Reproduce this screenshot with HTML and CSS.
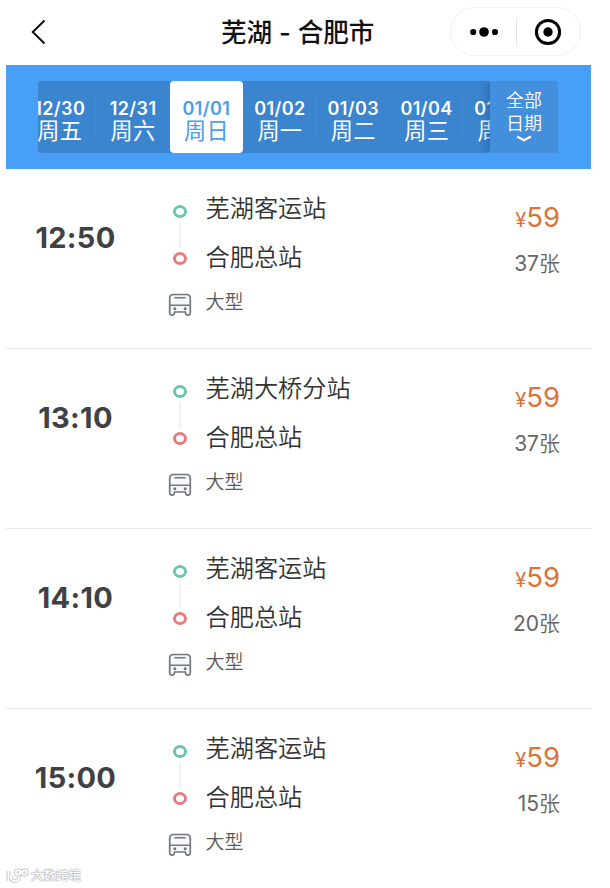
FILE: index.html
```html
<!DOCTYPE html>
<html lang="zh-CN">
<head>
  <meta charset="UTF-8" />
  <meta name="viewport" content="width=device-width, initial-scale=1" />
  <title>芜湖 - 合肥市</title>
  <link rel="stylesheet" href="styles.css">
</head>
<body>

<svg class="sprite" width="0" height="0">
  <symbol id="bus" viewBox="0 0 24 24">
    <path d="M5.500 1.500h13q3.800 0 3.800 3.800v14.200q0 2.700-2.400 2.700-2.300 0-2.600-3.200H6.700q-.3 3.200-2.600 3.200-2.400 0-2.400-2.700V5.300q0-3.800 3.800-3.800z" fill="#f3f6fb" stroke="#74787d" stroke-width="1.700" />
    <path d="M2 12.200h20M7 4.800h10" fill="none" stroke="#74787d" stroke-width="1.500" stroke-linecap="round" />
    <circle cx="6.800" cy="15.800" r="1.500" fill="#74787d" />
    <circle cx="17.200" cy="15.800" r="1.500" fill="#74787d" />
  </symbol>
</svg>

<header class="navbar">
  <svg class="back" width="15" height="26" viewBox="0 0 15 26">
    <path d="M13.500 1.500L1.800 13l11.700 11.500" fill="none" stroke="#111" stroke-width="2" />
  </svg>
  <h1>芜湖 - 合肥市</h1>
  <div class="capsule">
    <svg width="30" height="12" viewBox="0 0 30 12">
      <circle cx="4.200" cy="6" r="3.100" />
      <circle cx="15" cy="6" r="4.800" />
      <circle cx="26" cy="6" r="3.100" />
    </svg>
    <span class="capsule-line"></span>
    <svg width="28" height="28" viewBox="0 0 28 28">
      <circle cx="14" cy="14" r="11.600" fill="none" stroke="#000" stroke-width="3" />
      <circle cx="14" cy="14" r="4.700" />
    </svg>
  </div>
</header>

<div class="dates">
  <div class="date-list">
    <div class="date"><b>12/30</b><span>周五</span></div>
    <div class="date"><b>12/31</b><span>周六</span></div>
    <div class="date active"><b>01/01</b><span>周日</span></div>
    <div class="date"><b>01/02</b><span>周一</span></div>
    <div class="date"><b>01/03</b><span>周二</span></div>
    <div class="date"><b>01/04</b><span>周三</span></div>
    <div class="date"><b>01/05</b><span>周四</span></div>
  </div>
  <div class="all-dates">
    <span>全部</span>
    <span>日期</span>
    <svg width="16" height="7" viewBox="0 0 16 7">
      <path d="M1 1.500l7 3.800 7-3.800" fill="none" stroke="#fff" stroke-width="2.200" />
    </svg>
  </div>
</div>

<main class="trips">
  <div class="trip">
    <div class="time">12:50</div>
    <div class="route">
      <div class="track"><i class="dot from"></i><i class="line"></i><i class="dot to"></i><svg class="bus"><use href="#bus" /></svg></div>
      <div class="stops"><p>芜湖客运站</p><p>合肥总站</p><p class="type">大型</p></div>
    </div>
    <div class="fare"><div class="price"><small>¥</small>59</div><div class="left">37<span>张</span></div></div>
  </div>

  <div class="trip">
    <div class="time">13:10</div>
    <div class="route">
      <div class="track"><i class="dot from"></i><i class="line"></i><i class="dot to"></i><svg class="bus"><use href="#bus" /></svg></div>
      <div class="stops"><p>芜湖大桥分站</p><p>合肥总站</p><p class="type">大型</p></div>
    </div>
    <div class="fare"><div class="price"><small>¥</small>59</div><div class="left">37<span>张</span></div></div>
  </div>

  <div class="trip">
    <div class="time">14:10</div>
    <div class="route">
      <div class="track"><i class="dot from"></i><i class="line"></i><i class="dot to"></i><svg class="bus"><use href="#bus" /></svg></div>
      <div class="stops"><p>芜湖客运站</p><p>合肥总站</p><p class="type">大型</p></div>
    </div>
    <div class="fare"><div class="price"><small>¥</small>59</div><div class="left">20<span>张</span></div></div>
  </div>

  <div class="trip">
    <div class="time">15:00</div>
    <div class="route">
      <div class="track"><i class="dot from"></i><i class="line"></i><i class="dot to"></i><svg class="bus"><use href="#bus" /></svg></div>
      <div class="stops"><p>芜湖客运站</p><p>合肥总站</p><p class="type">大型</p></div>
    </div>
    <div class="fare"><div class="price"><small>¥</small>59</div><div class="left">15<span>张</span></div></div>
  </div>
</main>

<div class="watermark">
  <svg width="23" height="16" viewBox="0 0 23 16">
    <g fill="none" stroke="#bdbdbd" stroke-width="3.600">
      <path d="M2.500 3v10M5 8.500q0 4.500 4 4.500t4-4.500" />
      <circle cx="12" cy="4.500" r="2.300" />
      <circle cx="18.500" cy="4.500" r="2.300" />
    </g>
    <g fill="none" stroke="#fff" stroke-width="2">
      <path d="M2.500 3v10M5 8.500q0 4.500 4 4.500t4-4.500" />
      <circle cx="12" cy="4.500" r="2.300" />
      <circle cx="18.500" cy="4.500" r="2.300" />
    </g>
  </svg>
  <span>大数跨境</span>
</div>

</body>
</html>
```
FILE: styles.css
```css
* { box-sizing: border-box; }
body {
  font-family: Inter, "Noto Sans CJK SC", sans-serif;
  background: #fff;
  margin: 0;
  padding: 0 19px 0 6px;
  height: 888px;
  overflow: hidden;
  position: relative;
}
.sprite { display: block; }
h1, p { margin: 0; }

/* top bar */
.navbar {
  height: 65px;
  display: flex;
  align-items: center;
  padding: 0 10px 2px 25px;
}
.back { margin-right: 175px; }
h1 {
  font-size: 25.6px;
  line-height: 36px;
  padding-top: 2px;
  font-weight: 500;
  color: #111;
  white-space: nowrap;
}
.capsule {
  width: 131px;
  height: 49px;
  margin-left: auto;
  border: 1px solid #efefef;
  border-radius: 25px;
  display: flex;
  align-items: center;
  justify-content: space-between;
  padding: 0 18px;
}
.capsule-line {
  width: 1px;
  height: 28px;
  background: #e2e2e2;
}

/* date strip */
.dates {
  height: 104px;
  background: #479ff7;
  padding: 16px 33px 16px 32px;
  display: flex;
}
.date-list {
  width: 452px;
  height: 72px;
  background: #3b84ce;
  border-radius: 4px;
  overflow: hidden;
  display: flex;
}
.date {
  flex: 0 0 73.4px;
  display: flex;
  flex-direction: column;
  align-items: center;
  padding-top: 17px;
  color: #fff;
  background: linear-gradient(#4189d2, #4189d2) right center / 1px 46px no-repeat;
}
.date:first-child { margin-left: -15px; }
.date b {
  font-size: 18px;
  line-height: 21px;
  font-weight: 600;
  letter-spacing: 0.4px;
}
.date span {
  font-size: 22.2px;
  line-height: 24px;
  letter-spacing: 0.3px;
}
.date.active {
  background: #fff;
  color: #4a9de8;
  border-radius: 4px;
}
.all-dates {
  width: 68px;
  height: 72px;
  background: #438fdb;
  border-radius: 0 4px 4px 0;
  box-shadow: -2px 0 8px rgba(20, 60, 110, 0.4);
  clip-path: inset(0 0 0 -12px);
  display: flex;
  flex-direction: column;
  align-items: center;
  padding-top: 9px;
  color: #fff;
  font-size: 18px;
  line-height: 22.5px;
  font-weight: 350;
}

/* trip list */
.trip {
  height: 180px;
  border-bottom: 1px solid #e9e9e9;
  display: flex;
}
.trip:last-child { border-bottom: none; }
.time {
  width: 139px;
  text-align: center;
  padding-top: 49px;
  font-size: 29px;
  line-height: 40px;
  font-weight: 650;
  letter-spacing: 0.3px;
  color: #3f4145;
}
.route {
  flex: 1;
  display: flex;
}
.track {
  width: 58px;
  padding: 36px 0 0 12px;
  display: flex;
  flex-direction: column;
  align-items: center;
}
.dot {
  width: 14px;
  height: 13px;
  border: 3px solid #6cc5ae;
  border-radius: 50%;
}
.dot.to { border-color: #e67c7c; }
.line {
  width: 2px;
  height: 26px;
  margin: 4px 0;
  background: #f0f0f0;
}
.bus {
  width: 24px;
  height: 24px;
  margin-top: 28px;
}
.stops {
  padding: 15px 0 0 2.5px;
  font-size: 24.2px;
  line-height: 49px;
  font-weight: 350;
  color: #333;
}
.stops .type {
  font-size: 19px;
  line-height: 42px;
  color: #5c5c5c;
}
.fare {
  padding: 31px 31px 0 0;
  text-align: right;
}
.price {
  font-size: 27.5px;
  line-height: 34px;
  color: #d9733a;
}
.price small { font-size: 20px; }
.left {
  font-size: 21px;
  line-height: 30px;
  margin-top: 12px;
  color: #666;
}
.left span { font-weight: 350; }

/* corner mark lies over the list */
.watermark {
  position: absolute;
  left: 6px;
  bottom: 3px;
  display: flex;
  align-items: center;
  gap: 2px;
  font-size: 12.5px;
  line-height: 18px;
  font-weight: 500;
  color: #fff;
  text-shadow: 0 0 1px #999, 0 0 1px #999, 0 0 2px #bbb;
}
```
